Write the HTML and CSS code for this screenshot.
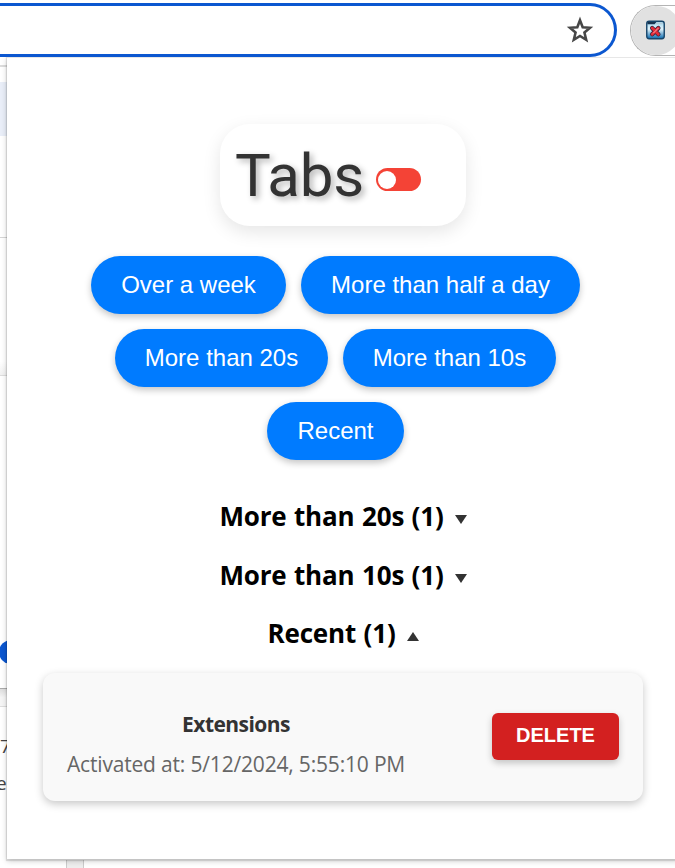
FILE: index.html
```html
<!DOCTYPE html>
<html lang="en">
<head>
<meta charset="utf-8">
<title>Tabs</title>
<link rel="stylesheet" href="styles.css">
</head>
<body>
<header class="toolbar">
  <div class="omnibox">
    <svg class="star" viewBox="0 0 24 24"><path d="M12 3.6 14.3 9.6 20.6 10.1 15.8 14.2 17.3 20.4 12 17.1 6.7 20.4 8.2 14.2 3.4 10.1 9.7 9.6Z" fill="none" stroke="#474747" stroke-width="2.2"/></svg>
  </div>
  <div class="extensions">
    <div class="ext-button">
      <svg class="ext-icon" viewBox="0 0 20 20">
        <defs><linearGradient id="g" x1="0" y1="0" x2="0" y2="1"><stop offset="0" stop-color="#9bd3ee"/><stop offset=".45" stop-color="#e2f3fa"/><stop offset="1" stop-color="#0869ae"/></linearGradient></defs>
        <rect x=".8" y=".8" width="18.4" height="18.4" rx="2.5" fill="url(#g)" stroke="#17456b" stroke-width="1.5"/>
        <path d="M1.5 3.5V2.5Q1.5 1.5 2.5 1.5H11L9 4H1.5Z" fill="#173350"/>
        <path d="M11 2H17.5V4H10Z" fill="#b4cbd8"/>
        <path d="M6.5 8 13 14.5M13 8 6.5 14.5" stroke="#35233f" stroke-width="4.6" stroke-linecap="round"/>
        <path d="M6.5 8 13 14.5M13 8 6.5 14.5" stroke="#e32a38" stroke-width="3" stroke-linecap="round"/>
        <path d="M7.5 13.5 13 8" stroke="#f7b4b8" stroke-width="1"/>
      </svg>
    </div>
  </div>
</header>
<main class="stage">
  <div class="page">
    <div class="page-bar"></div>
    <div class="page-highlight"></div>
    <div class="page-section"></div>
    <div class="page-gap"></div>
    <div class="page-card"><span class="page-dot"></span></div>
    <div class="page-space"></div>
    <div class="page-text"><span class="page-number">7</span><span>e</span></div>
  </div>
  <div class="page-bottom"><div class="gutter"></div></div>
  <section class="popup">
    <div class="title-card">
      <h1>Tabs</h1>
      <div class="switch"><span class="knob"></span></div>
    </div>
    <nav class="filters">
      <button class="w-week">Over a week</button>
      <button class="w-half">More than half a day</button>
      <button class="w-seconds">More than 20s</button>
      <button class="w-seconds">More than 10s</button>
      <button class="w-recent">Recent</button>
    </nav>
    <div class="groups">
      <h2><span>More than 20s (1)</span><svg class="arrow" viewBox="0 0 12 9"><path d="M0 0H12L6 9Z"/></svg></h2>
      <h2><span>More than 10s (1)</span><svg class="arrow" viewBox="0 0 12 9"><path d="M0 0H12L6 9Z"/></svg></h2>
      <h2><span>Recent (1)</span><svg class="arrow" viewBox="0 0 12 9"><path d="M0 9H12L6 0Z"/></svg></h2>
    </div>
    <article class="tab-card">
      <div class="tab-info">
        <h3>Extensions</h3>
        <p>Activated at: 5/12/2024, 5:55:10 PM</p>
      </div>
      <button class="delete">DELETE</button>
    </article>
  </section>
</main>
</body>
</html>
```
FILE: styles.css
```css
* { box-sizing: border-box; }
body {
  margin: 0;
  width: 675px;
  height: 868px;
  overflow: hidden;
  background: #fff;
  font-family: "Open Sans", "Noto Sans", sans-serif;
}
h1, h2, h3, p { margin: 0; white-space: nowrap; }
button { border: 0; padding: 0; font-family: "Liberation Sans", sans-serif; color: #fff; white-space: nowrap; }

.toolbar { display: flex; height: 57px; padding-top: 3px; overflow: hidden; }
.omnibox {
  width: 617px;
  height: 54px;
  flex-shrink: 0;
  border: 3px solid #0b57d0;
  border-left: 0;
  border-radius: 0 27px 27px 0;
  display: flex;
  justify-content: flex-end;
  padding: 10px 20px 0 0;
}
.star { width: 28px; height: 28px; }
.extensions {
  width: 45px;
  height: 51px;
  margin: 2px 0 0 13px;
  flex-shrink: 0;
  border: 1.5px solid #b4b4b4;
  border-right: 0;
  border-radius: 26px 0 0 26px;
  overflow: hidden;
}
.ext-button {
  width: 50px;
  height: 49px;
  border-radius: 25px;
  background: #e1e1e1;
  padding: 14px 0 0 15px;
}
.ext-icon { display: block; width: 19px; height: 20px; }

.stage { position: relative; height: 811px; overflow: hidden; }
.page { width: 7px; height: 803px; overflow: hidden; display: flex; flex-direction: column; }
.page > div { flex-shrink: 0; }
.page-bar { height: 10px; border-bottom: 2px solid #dcdcdc; }
.page-highlight { height: 54px; margin-top: 15px; background: #e9eef8; }
.page-section { height: 102px; border-bottom: 1px solid #d5d5d5; }
.page-gap { height: 138px; background: linear-gradient(#fff 90%, #f1f1f1); border-bottom: 1px solid #ddd; }
.page-card { height: 313px; padding-top: 264px; border-bottom: 1px solid #aaa; }
.page-dot { display: block; width: 24px; height: 24px; margin-left: -1px; border-radius: 12px; background: #0b57d0; }
.page-space { height: 18px; background: linear-gradient(#ddd, #f5f5f5 50%); border-bottom: 1px solid #ddd; }
.page-text { height: 153px; padding-top: 27px; color: #444; font-size: 19px; line-height: 24px; display: flex; flex-direction: column; gap: 13px; }
.page-text span { margin-left: -4px; }
.page-text .page-number { margin-left: 0; }
.page-bottom { height: 8px; padding-left: 66px; }
.gutter { width: 18px; height: 8px; background: #eee; border: solid #ccc; border-width: 0 1px; }

.popup {
  position: absolute;
  left: 7px;
  top: 0;
  width: 672px;
  height: 802px;
  background: #fff;
  border-top: 1px solid #e7e7e7;
  box-shadow: 0 1px 1px 1px rgba(0, 0, 0, .11), 0 2px 6px rgba(0, 0, 0, .2);
  display: flex;
  flex-direction: column;
  align-items: center;
  padding-top: 66px;
}
.title-card {
  width: 246px;
  height: 102px;
  border-radius: 30px;
  box-shadow: 0 6px 18px rgba(0, 0, 0, .1);
  display: flex;
  align-items: center;
  padding-left: 15px;
}
h1 {
  width: 141px;
  padding-top: 1px;
  font: 400 60px/70px Roboto, sans-serif;
  letter-spacing: -.2px;
  color: #333;
  text-shadow: 3px 3px 6px rgba(0, 0, 0, .3);
}
.switch { width: 45px; height: 23px; margin-top: 9px; border-radius: 12px; background: #f44336; padding: 2.5px 2px; }
.knob { display: block; width: 18px; height: 18px; border-radius: 50%; background: #fff; }

.filters {
  width: 520px;
  margin: 30px 15px 0 0;
  display: flex;
  flex-wrap: wrap;
  justify-content: center;
  gap: 15px;
}
.filters button {
  height: 58px;
  border-radius: 30px;
  background: #007bff;
  font-size: 24px;
  box-shadow: 0 3px 7px rgba(0, 0, 0, .23);
}
.w-week { width: 195px; }
.w-half { width: 279px; }
.w-seconds { width: 213px; }
.w-recent { width: 137px; }

.groups { margin-top: 38px; display: flex; flex-direction: column; align-items: center; gap: 22.5px; }
h2 { display: flex; font-size: 26px; line-height: 36px; font-weight: 700; letter-spacing: -.15px; word-spacing: .8px; color: #000; }
.arrow { width: 12px; height: 9px; margin: 17px 0 0 11px; fill: #333; }

.tab-card {
  width: 600px;
  height: 128px;
  margin-top: 21.5px;
  border-radius: 12px;
  background: #f9f9f9;
  box-shadow: 0 3px 8px rgba(0, 0, 0, .22);
  display: flex;
  justify-content: space-between;
  align-items: center;
  padding: 0 24px;
}
.tab-info { width: 338px; padding-top: 14px; text-align: center; }
h3 { font-size: 21px; line-height: 30px; letter-spacing: -.55px; color: #333; }
p { margin-top: 10px; font-size: 21px; line-height: 30px; letter-spacing: -.18px; color: #666; }
.delete {
  width: 127px;
  height: 47px;
  padding-bottom: 3px;
  border-radius: 6px;
  background: #d32020;
  font-size: 20px;
  font-weight: 700;
  box-shadow: 0 3px 7px rgba(0, 0, 0, .22);
}
```
